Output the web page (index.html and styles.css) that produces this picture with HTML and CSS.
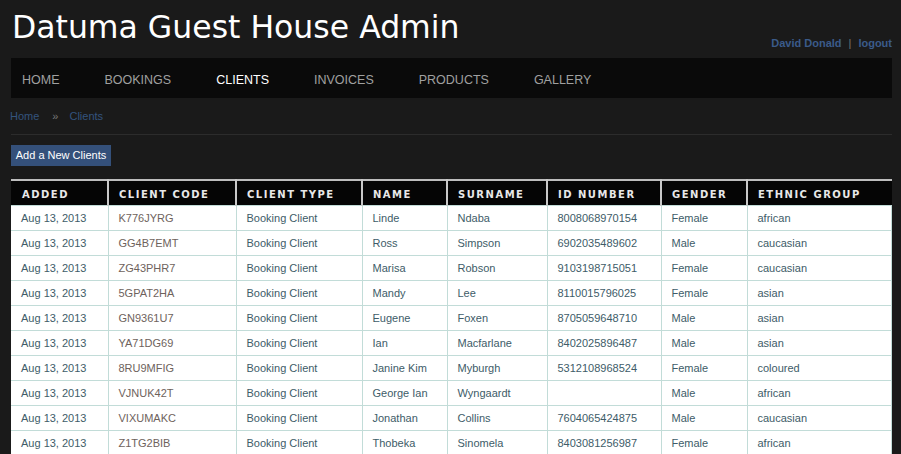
FILE: index.html
```html
<!DOCTYPE html>
<html>
<head>
<meta charset="utf-8">
<link rel="stylesheet" href="styles.css">
</head>
<body>
<div class="page">
  <header class="top">
    <h1 class="title">Datuma Guest House Admin</h1>
    <div class="user"><a href="#">David Donald</a><span class="sep">|</span><a href="#">logout</a></div>
  </header>
  <nav class="nav">
    <a href="#">HOME</a>
    <a href="#">BOOKINGS</a>
    <a href="#" class="active">CLIENTS</a>
    <a href="#">INVOICES</a>
    <a href="#">PRODUCTS</a>
    <a href="#">GALLERY</a>
  </nav>
  <div class="crumbs"><a href="#">Home</a><span class="raquo">»</span><a href="#">Clients</a></div>
  <div class="rule"></div>
  <a href="#" class="btn">Add a New Clients</a>
  <table class="grid">
    <colgroup>
      <col style="width:97px"><col style="width:128px"><col style="width:126px"><col style="width:85px"><col style="width:100px"><col style="width:114px"><col style="width:86px"><col>
    </colgroup>
    <thead>
      <tr><th>Added</th><th>Client Code</th><th>Client Type</th><th>Name</th><th>Surname</th><th>ID Number</th><th>Gender</th><th>Ethnic Group</th></tr>
    </thead>
    <tbody>
      <tr><td>Aug 13, 2013</td><td class="code">K776JYRG</td><td>Booking Client</td><td>Linde</td><td>Ndaba</td><td>8008068970154</td><td>Female</td><td>african</td></tr>
      <tr><td>Aug 13, 2013</td><td class="code">GG4B7EMT</td><td>Booking Client</td><td>Ross</td><td>Simpson</td><td>6902035489602</td><td>Male</td><td>caucasian</td></tr>
      <tr><td>Aug 13, 2013</td><td class="code">ZG43PHR7</td><td>Booking Client</td><td>Marisa</td><td>Robson</td><td>9103198715051</td><td>Female</td><td>caucasian</td></tr>
      <tr><td>Aug 13, 2013</td><td class="code">5GPAT2HA</td><td>Booking Client</td><td>Mandy</td><td>Lee</td><td>8110015796025</td><td>Female</td><td>asian</td></tr>
      <tr><td>Aug 13, 2013</td><td class="code">GN9361U7</td><td>Booking Client</td><td>Eugene</td><td>Foxen</td><td>8705059648710</td><td>Male</td><td>asian</td></tr>
      <tr><td>Aug 13, 2013</td><td class="code">YA71DG69</td><td>Booking Client</td><td>Ian</td><td>Macfarlane</td><td>8402025896487</td><td>Male</td><td>asian</td></tr>
      <tr><td>Aug 13, 2013</td><td class="code">8RU9MFIG</td><td>Booking Client</td><td>Janine Kim</td><td>Myburgh</td><td>5312108968524</td><td>Female</td><td>coloured</td></tr>
      <tr><td>Aug 13, 2013</td><td class="code">VJNUK42T</td><td>Booking Client</td><td>George Ian</td><td>Wyngaardt</td><td></td><td>Male</td><td>african</td></tr>
      <tr><td>Aug 13, 2013</td><td class="code">VIXUMAKC</td><td>Booking Client</td><td>Jonathan</td><td>Collins</td><td>7604065424875</td><td>Male</td><td>caucasian</td></tr>
      <tr><td>Aug 13, 2013</td><td class="code">Z1TG2BIB</td><td>Booking Client</td><td>Thobeka</td><td>Sinomela</td><td>8403081256987</td><td>Female</td><td>african</td></tr>
    </tbody>
  </table>
</div>
</body>
</html>
```
FILE: styles.css
```css
html, body {
  margin: 0;
  padding: 0;
  background: #1a1a1a;
}
body {
  font-family: "Liberation Sans", Arial, sans-serif;
  font-size: 11px;
  color: #405c68;
}
a { text-decoration: none; }
.page {
  padding: 0 9px 0 11px;
}
.top {
  display: flex;
  justify-content: space-between;
  align-items: flex-end;
  height: 58px;
}
.title {
  margin: 0 0 0 1px;
  padding-top: 7px;
  align-self: flex-start;
  font-family: "DejaVu Sans", sans-serif;
  font-weight: normal;
  font-size: 31.5px;
  line-height: 40px;
  color: #ffffff;
}
.user {
  font-weight: bold;
  font-size: 11px;
  padding-bottom: 9px;
}
.user a { color: #3b5b8a; }
.user .sep { color: #777; font-weight: normal; margin: 0 7px; }
.nav {
  display: flex;
  height: 40px;
  box-sizing: border-box;
  padding-top: 3px;
  align-items: center;
  background: #0a0a0a;
  padding-left: 11px;
}
.nav a {
  font-family: "Liberation Sans", Arial, sans-serif;
  font-size: 12.5px;
  color: #a0a0a0;
  margin-right: 45px;
}
.nav a.active { color: #ffffff; }
.crumbs {
  padding: 12px 0 0 0;
  margin-left: -1px;
  height: 26px;
  box-sizing: border-box;
  font-size: 11px;
}
.crumbs a { color: #34547e; }
.crumbs .raquo { color: #777; margin: 0 11px 0 13px; }
.rule {
  margin-top: 10px;
  height: 1px;
  background: #2c2c2c;
}
.btn {
  display: inline-block;
  margin-top: 10px;
  width: 100px;
  height: 21px;
  line-height: 21px;
  text-align: center;
  white-space: nowrap;
  background: #34507a;
  color: #ffffff;
  font-size: 11px;
}
.grid {
  margin-top: 13px;
  width: 881px;
  border-collapse: collapse;
  table-layout: fixed;
  background: #ffffff;
  border-top: 2px solid #bdbdbd;
}
.grid th {
  background: #050505;
  color: #e8e8e8;
  font-family: "DejaVu Sans", sans-serif;
  font-size: 10px;
  font-weight: bold;
  text-transform: uppercase;
  letter-spacing: 1.5px;
  text-align: left;
  height: 25px;
  padding: 3px 0 0 10px;
  border-left: 2px solid #c8c8c8;
  box-sizing: border-box;
}
.grid th:first-child { border-left: none; padding-left: 11px; }
.grid td {
  height: 23px;
  padding: 1px 0 0 10px;
  border: 1px solid #c2dcd8;
  white-space: nowrap;
  overflow: hidden;
}
.grid td:first-child { border-left: none; }
.grid td.code { color: #6e625c; }
```
